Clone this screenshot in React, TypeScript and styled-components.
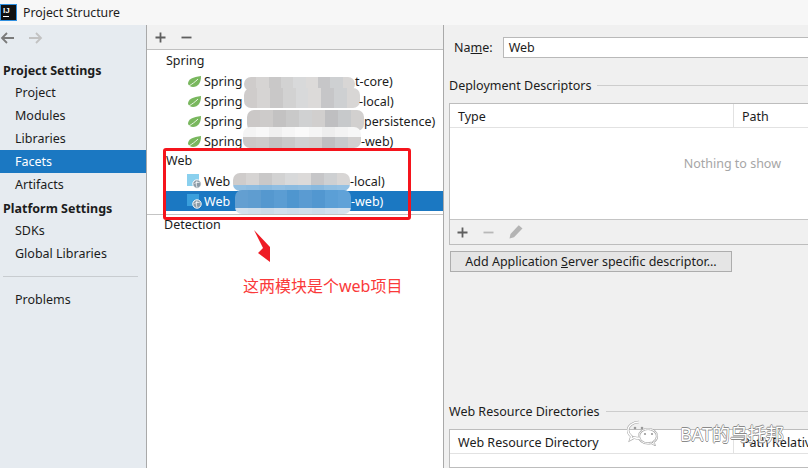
import React from 'react';
import styled, { createGlobalStyle } from 'styled-components';

const GlobalStyle = createGlobalStyle`
  html, body {
    margin: 0;
    padding: 0;
    width: 808px;
    height: 468px;
    overflow: hidden;
    background: #f0f0f0;
  }
  body {
    font-family: "Noto Sans", "Noto Sans CJK SC", sans-serif;
    font-size: 12.5px;
    color: #1c1c1c;
  }
`;

const Window = styled.div`
  position: relative;
  width: 808px;
  height: 468px;
  display: flex;
  flex-direction: column;
  overflow: hidden;
`;

const TitleBar = styled.div`
  height: 25px;
  flex: none;
  display: flex;
  align-items: center;
  gap: 7px;
  padding-left: 1px;
  background: #f7f7f7;
  font-size: 12.3px;
`;

const AppLogo = styled.div`
  width: 15px;
  height: 15px;
  background: #111;
  box-shadow: 0 0 0 1px #2f8fe0;
  color: #fff;
  font: bold 8px/9px "Liberation Sans", sans-serif;
  padding: 1px 0 0 2px;
  box-sizing: border-box;
  &::after {
    content: '';
    display: block;
    width: 6px;
    height: 1px;
    margin-top: 1px;
    background: #fff;
  }
`;

const Body = styled.div`
  flex: 1;
  display: flex;
  min-height: 0;
`;

const Sidebar = styled.aside`
  width: 146px;
  flex: none;
  background: #e6ebf0;
  border-right: 1px solid #a9a9a9;
  display: flex;
  flex-direction: column;
`;

const NavArrows = styled.div`
  height: 26px;
  display: flex;
  align-items: center;
  gap: 13px;
  margin-bottom: 7px;
`;

const SectionTitle = styled.div`
  height: 23px;
  line-height: 25px;
  padding-left: 3px;
  font-weight: 700;
`;

const SideItem = styled.div<{ $active?: boolean }>`
  height: 23px;
  line-height: 23px;
  padding-left: 15px;
  background: ${(p) => (p.$active ? '#1b78c2' : 'transparent')};
  color: ${(p) => (p.$active ? '#fff' : '#1c1c1c')};
`;

const SideDivider = styled.div`
  height: 1px;
  background: #c8ccd0;
  margin: 11px 8px 11px 3px;
`;

const Middle = styled.section`
  width: 296px;
  flex: none;
  background: #fff;
  border-right: 1px solid #a9a9a9;
  display: flex;
  flex-direction: column;
`;

const MiddleToolbar = styled.div`
  height: 24px;
  flex: none;
  display: flex;
  align-items: center;
  gap: 15px;
  padding-left: 8px;
  background: #f1f1f1;
  border-bottom: 1px solid #c0c0c0;
`;

const TreeList = styled.div`
  display: flex;
  flex-direction: column;
  padding-top: 1px;
`;

const GroupLabel = styled.div<{ $indent?: number }>`
  height: 20px;
  line-height: 20px;
  padding-left: ${(p) => p.$indent ?? 19}px;
`;

const TreeRow = styled.div<{ $selected?: boolean }>`
  position: relative;
  height: 20px;
  display: flex;
  align-items: center;
  gap: 2px;
  padding-left: ${(p) => (p.$selected ? '24px' : '40px')};
  margin-left: ${(p) => (p.$selected ? '16px' : '0')};
  background: ${(p) => (p.$selected ? '#1b78c2' : 'transparent')};
  color: ${(p) => (p.$selected ? '#fff' : '#1c1c1c')};
`;

const RowTail = styled.span<{ $left: number }>`
  position: absolute;
  left: ${(p) => p.$left}px;
  z-index: 2;
`;

const Mosaic = styled.div<{ $left: number; $top: number; $width: number; $bands: string }>`
  position: absolute;
  left: ${(p) => p.$left}px;
  top: ${(p) => p.$top}px;
  width: ${(p) => p.$width}px;
  border-radius: 7px;
  overflow: hidden;
  display: grid;
  grid-template-columns: repeat(9, 1fr);
  grid-template-rows: ${(p) => p.$bands};
  z-index: 1;
`;

const MosaicCell = styled.div<{ $tone: string }>`
  background: ${(p) => p.$tone};
`;

const TreeDivider = styled.div`
  height: 1px;
  background: #c4c4c4;
  margin-top: 3px;
`;

const RedFrame = styled.div`
  position: absolute;
  left: 163px;
  top: 148px;
  width: 242px;
  height: 66px;
  border: 3px solid #f5141c;
  border-radius: 3px;
  z-index: 2;
`;

const AnnotationArrow = styled.svg`
  position: absolute;
  left: 250px;
  top: 228px;
  z-index: 2;
`;

const AnnotationText = styled.div`
  position: absolute;
  left: 243px;
  top: 275px;
  font-size: 16px;
  line-height: 22px;
  color: #fa3a3a;
  white-space: nowrap;
  z-index: 2;
`;

const Detail = styled.section`
  flex: 1;
  min-width: 0;
  display: flex;
  flex-direction: column;
  padding: 12px 0 0 5px;
  background: #f0f0f0;
`;

const NameRow = styled.div`
  display: flex;
  align-items: center;
  gap: 10px;
  padding-left: 5px;
  height: 21px;
`;

const NameInput = styled.div`
  flex: 1;
  height: 19px;
  line-height: 19px;
  margin-right: -4px;
  padding-left: 5px;
  background: #fff;
  border: 1px solid #b9b9b9;
`;

const Legend = styled.div<{ $top: number }>`
  display: flex;
  align-items: center;
  gap: 6px;
  height: 18px;
  margin-top: ${(p) => p.$top}px;
  white-space: nowrap;
  &::after {
    content: '';
    flex: 1;
    height: 1px;
    background: #cdcdcd;
  }
`;

const TablePanel = styled.div<{ $height: number; $top: number }>`
  flex: none;
  height: ${(p) => p.$height}px;
  margin-top: ${(p) => p.$top}px;
  margin-right: -4px;
  display: flex;
  flex-direction: column;
  background: #fff;
  border: 1px solid #bdbdbd;
  border-right: none;
  box-sizing: border-box;
`;

const TableHead = styled.div<{ $first: number }>`
  height: 23px;
  flex: none;
  display: grid;
  grid-template-columns: ${(p) => p.$first}px 1fr;
  border-bottom: 1px solid #e2e2e2;
  white-space: nowrap;
  overflow: hidden;
`;

const HeadCell = styled.div<{ $divided?: boolean }>`
  line-height: 26px;
  padding-left: 8px;
  border-left: ${(p) => (p.$divided ? '1px solid #e2e2e2' : 'none')};
`;

const EmptyArea = styled.div`
  flex: 1;
  display: flex;
  justify-content: flex-end;
  padding: 27px 31px 0 0;
  color: #a6a6a6;
`;

const TableTools = styled.div`
  height: 24px;
  flex: none;
  display: flex;
  align-items: center;
  gap: 15px;
  padding-left: 7px;
  background: #f0f0f0;
  border-top: 1px solid #c4c4c4;
`;

const AddButton = styled.button`
  align-self: flex-start;
  width: 282px;
  height: 21px;
  margin: 6px 0 0 1px;
  padding: 0;
  background: #e5e5e5;
  border: 1px solid #adadad;
  color: #1c1c1c;
  font: inherit;
  text-align: center;
`;

const Spacer = styled.div`
  flex: 1;
`;

const Watermark = styled.div`
  position: absolute;
  left: 627px;
  top: 420px;
  height: 26px;
  display: flex;
  align-items: center;
  gap: 20px;
  font-size: 18px;
  color: #fff;
  text-shadow: 0.6px 0 0 #8a8a8a, -0.6px 0 0 #8a8a8a, 0 0.6px 0 #8a8a8a, 0 -0.6px 0 #8a8a8a;
  white-space: nowrap;
  z-index: 3;
`;

function Leaf() {
  return (
    <svg width="15" height="13" viewBox="0 0 15 13">
      <path d="M1 9C1 4 6 2 14 1c0 7-3 11-8 11-2 0-4-1-5-3z" fill="#79b75e" />
      <path d="M2 11C5 9 8 7 11 4" stroke="#eaf4e4" strokeWidth="1" fill="none" />
    </svg>
  );
}

function WebIcon({ square }: { square: string }) {
  return (
    <svg width="15" height="16" viewBox="0 0 15 16">
      <rect x="0" y="1" width="12" height="12" fill={square} />
      <circle cx="10" cy="11" r="4.2" fill="#8a9aa6" stroke="#fff" strokeWidth="1" />
      <path d="M7.500 10.500c2-1.500 3-1 5-1M10 8c-1 2-1 4 0 6" stroke="#fff" strokeWidth="0.8" fill="none" />
    </svg>
  );
}

function Plus({ color = '#5f5f5f' }: { color?: string }) {
  return (
    <svg width="11" height="11" viewBox="0 0 11 11">
      <path d="M5.500 0.500v10M0.500 5.500h10" stroke={color} strokeWidth="1.8" />
    </svg>
  );
}

function Minus({ color = '#5f5f5f' }: { color?: string }) {
  return (
    <svg width="11" height="11" viewBox="0 0 11 11">
      <path d="M0.500 5.500h10" stroke={color} strokeWidth="1.8" />
    </svg>
  );
}

function Pencil() {
  return (
    <svg width="14" height="14" viewBox="0 0 14 14">
      <path d="M0.500 13.500l1-4.500 7.500-8 .8-.8L13.500 3.500l-.8.8-7.700 8z" fill="#b4b4b4" />
    </svg>
  );
}

function NavArrow({ dir, color }: { dir: 'left' | 'right'; color: string }) {
  const d = dir === 'left' ? 'M14 6H2M7 1L2 6l5 5' : 'M1 6h12M8 1l5 5-5 5';
  return (
    <svg width="15" height="12" viewBox="0 0 15 12">
      <path d={d} stroke={color} strokeWidth="1.8" fill="none" />
    </svg>
  );
}

const bubbleLeft = 'M12 2C6 2 1 6 1 10.500c0 2.500 1.500 4.500 3.500 6l-1 3 3.500-2c1.500.5 3 .8 5 .8';
const bubbleRight = 'M21 9c-5 0-9 3.200-9 7.200s4 7.200 9 7.200c1.200 0 2.300-.2 3.300-.5l3 1.600-.8-2.600c2-1.300 3.500-3.400 3.500-5.700 0-4-4-7.200-9-7.200z';

function WeChatMark() {
  return (
    <svg width="33" height="26" viewBox="0 0 33 26">
      <path d={bubbleLeft} fill="none" stroke="#a8a8a8" strokeWidth="2.6" />
      <path d={bubbleRight} fill="none" stroke="#a8a8a8" strokeWidth="2.2" />
      <path d={bubbleLeft} fill="none" stroke="#fff" strokeWidth="1.4" />
      <path d={bubbleRight} fill="none" stroke="#fff" strokeWidth="1" />
      <circle cx="8" cy="8" r="1.300" fill="#999" />
      <circle cx="15" cy="8" r="1.300" fill="#999" />
      <circle cx="18" cy="14" r="1.100" fill="#999" />
      <circle cx="25" cy="14" r="1.100" fill="#999" />
    </svg>
  );
}

const greys = ['#cfcccb', '#d6d4d3', '#c9c8c8', '#d2d2d2', '#d8d9da', '#dcdad9', '#c6c6c8', '#ced0d2', '#d8d6d5'];
const darkGreys = ['#cbc8c7', '#cdcbca', '#c3c2c2', '#c9c9c9', '#d0d1d2', '#d1cfce', '#bfbfc1', '#c7c9cb', '#d2d0cf'];
const pales = ['#f4f4f4', '#f8f8f8', '#f0f0f0', '#f6f6f6', '#fafafa', '#f5f5f5', '#eeeeee', '#f3f3f3', '#f7f7f7'];
const skies = ['#93c0e2', '#8fbde1', '#8abadf', '#90bee2', '#8bbbe0', '#8fbde1', '#88b9df', '#91bfe2', '#94c1e4'];
const blues = ['#639fd1', '#5f9dd0', '#5598cf', '#5b9dd3', '#4f96cf', '#5a9bd2', '#5297d0', '#5b9fd6', '#60a2d8'];
const mists = ['#d3e1ed', '#cfdeeb', '#cbdbe9', '#d1dfec', '#cddcea', '#d0dfec', '#ccdcea', '#d2e0ed', '#d5e3ef'];

const springRows = [
  { tail: 't-core)', tailLeft: 208, left: 97, top: 6, width: 111, bands: '14px', tones: [greys] },
  { tail: '-local)', tailLeft: 212, left: 97, top: -3, width: 116, bands: '20px', tones: [greys] },
  { tail: 'persistence)', tailLeft: 217, left: 100, top: -1, width: 117, bands: '21px', tones: [darkGreys] },
  { tail: '-web)', tailLeft: 214, left: 96, top: -4, width: 118, bands: '10px 11px', tones: [pales, darkGreys] },
];

function MosaicCells({ tones }: { tones: string[][] }) {
  return (
    <>
      {tones.flat().map((tone, i) => (
        <MosaicCell key={i} $tone={tone} />
      ))}
    </>
  );
}

export default function App() {
  return (
    <Window>
      <GlobalStyle />
      <TitleBar>
        <AppLogo>IJ</AppLogo>
        Project Structure
      </TitleBar>
      <Body>
        <Sidebar>
          <NavArrows>
            <NavArrow dir="left" color="#7b7b7b" />
            <NavArrow dir="right" color="#c2c2c2" />
          </NavArrows>
          <SectionTitle>Project Settings</SectionTitle>
          <SideItem>Project</SideItem>
          <SideItem>Modules</SideItem>
          <SideItem>Libraries</SideItem>
          <SideItem $active>Facets</SideItem>
          <SideItem>Artifacts</SideItem>
          <SectionTitle>Platform Settings</SectionTitle>
          <SideItem>SDKs</SideItem>
          <SideItem>Global Libraries</SideItem>
          <SideDivider />
          <SideItem>Problems</SideItem>
        </Sidebar>
        <Middle>
          <MiddleToolbar>
            <Plus />
            <Minus />
          </MiddleToolbar>
          <TreeList>
            <GroupLabel>Spring</GroupLabel>
            {springRows.map((row) => (
              <TreeRow key={row.tail}>
                <Leaf />
                Spring
                <Mosaic $left={row.left} $top={row.top} $width={row.width} $bands={row.bands}>
                  <MosaicCells tones={row.tones} />
                </Mosaic>
                <RowTail $left={row.tailLeft}>{row.tail}</RowTail>
              </TreeRow>
            ))}
            <GroupLabel>Web</GroupLabel>
            <TreeRow>
              <WebIcon square="#8ad0ee" />
              Web
              <Mosaic $left={86} $top={2} $width={117} $bands="12px 6px">
                <MosaicCells tones={[greys, skies]} />
              </Mosaic>
              <RowTail $left={203}>-local)</RowTail>
            </TreeRow>
            <TreeRow $selected>
              <WebIcon square="#3a9fdc" />
              Web
              <Mosaic $left={72} $top={-1} $width={116} $bands="18px 6px">
                <MosaicCells tones={[blues, mists]} />
              </Mosaic>
              <RowTail $left={188}>-web)</RowTail>
            </TreeRow>
            <TreeDivider />
            <GroupLabel $indent={17}>Detection</GroupLabel>
          </TreeList>
        </Middle>
        <Detail>
          <NameRow>
            <span>
              Na<u>m</u>e:
            </span>
            <NameInput>Web</NameInput>
          </NameRow>
          <Legend $top={18}>Deployment Descriptors</Legend>
          <TablePanel $height={142} $top={9}>
            <TableHead $first={283}>
              <HeadCell>Type</HeadCell>
              <HeadCell $divided>Path</HeadCell>
            </TableHead>
            <EmptyArea>Nothing to show</EmptyArea>
            <TableTools>
              <Plus />
              <Minus color="#b8b8b8" />
              <Pencil />
            </TableTools>
          </TablePanel>
          <AddButton>
            Add Application <u>S</u>erver specific descriptor...
          </AddButton>
          <Spacer />
          <Legend $top={0}>Web Resource Directories</Legend>
          <TablePanel $height={39} $top={9}>
            <TableHead $first={283}>
              <HeadCell>Web Resource Directory</HeadCell>
              <HeadCell $divided>Path Relativ</HeadCell>
            </TableHead>
          </TablePanel>
        </Detail>
      </Body>
      <RedFrame />
      <AnnotationArrow width="22" height="36" viewBox="0 0 22 36">
        <path d="M4 2L20 19V34L8 25L13 20Z" fill="#ee1c25" />
      </AnnotationArrow>
      <AnnotationText>这两模块是个web项目</AnnotationText>
      <Watermark>
        <WeChatMark />
        BAT的乌托邦
      </Watermark>
    </Window>
  );
}
